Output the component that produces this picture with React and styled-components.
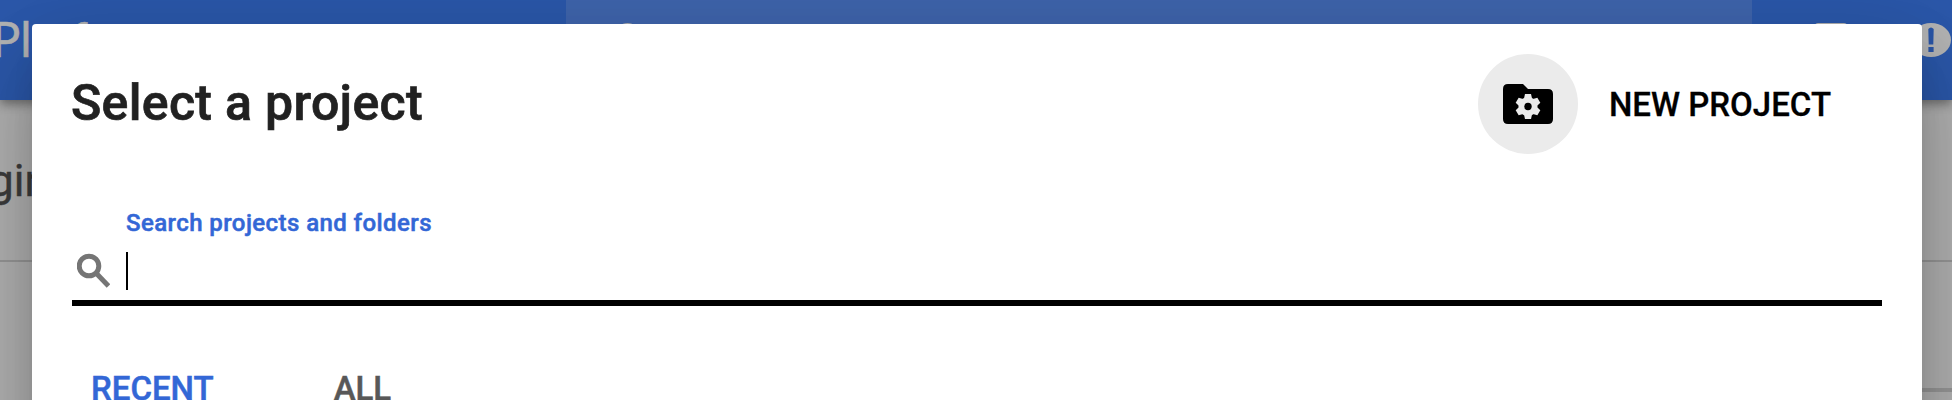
import React from "react";
import styled, { createGlobalStyle } from "styled-components";

const Global = createGlobalStyle`
  *, *::before, *::after { box-sizing: border-box; }
  html, body { margin: 0; height: 400px; overflow: hidden; }
  body { font-family: Roboto, "Liberation Sans", sans-serif; background: #b2b2b2; }
`;

const Screen = styled.div`
  position: relative;
  width: 1952px;
  height: 400px;
  overflow: hidden;
`;

const TopBar = styled.header`
  position: relative;
  display: flex;
  height: 100px;
  background: #2b58ab;
  box-shadow: 0 4px 10px rgba(0, 0, 0, 0.4);
`;

const Brand = styled.div`
  flex: none;
  display: flex;
  justify-content: flex-start;
  width: 566px;
  padding-top: 9px;
  overflow: hidden;
  color: #b5b5b5;
  font-family: Lato, sans-serif;
  font-size: 48px;
  font-weight: 400;
  line-height: 60px;
  white-space: nowrap;
`;

const BrandName = styled.span`
  margin-left: -8.5px;
  -webkit-text-stroke: 0.5px currentColor;
`;

const TopSearch = styled.div`
  flex: none;
  width: 1186px;
  height: 80px;
  padding: 21px 0 0 48px;
  background: #3f65ad;
`;

const TopActions = styled.div`
  display: flex;
  flex: 1;
  padding-left: 63px;
  padding-top: 23px;
  gap: 65px;
`;

const ActionIcon = styled.svg`
  flex: none;
  display: block;
`;

const PageTitle = styled.h1`
  margin: 0;
  height: 160px;
  padding-top: 55px;
  overflow: hidden;
  color: #3c3c3c;
  font-size: 44px;
  font-weight: 400;
  line-height: 52px;
`;

const TitleText = styled.span`
  margin-left: -11px;
  -webkit-text-stroke: 0.4px currentColor;
`;

const Rule = styled.div`
  width: ${(p) => p.$width || "100%"};
  height: ${(p) => p.$size}px;
  margin-left: auto;
  margin-bottom: ${(p) => p.$after || 0}px;
  background: #979797;
`;

const Dialog = styled.section`
  position: absolute;
  top: 24px;
  left: 32px;
  width: 1890px;
  height: 700px;
  padding: 30px 40px 0;
  border-radius: 4px;
  background: #fff;
  box-shadow: 0 22px 30px -14px rgba(0, 0, 0, 0.2),
    0 48px 76px 6px rgba(0, 0, 0, 0.14), 0 18px 92px 16px rgba(0, 0, 0, 0.12);
`;

const DialogHeader = styled.div`
  display: flex;
  align-items: center;
  justify-content: space-between;
  height: 100px;
`;

const DialogTitle = styled.h2`
  margin: 0 0 2px -1px;
  color: #212121;
  font-size: 50px;
  font-weight: 500;
  line-height: 60px;
  letter-spacing: 0.33px;
  -webkit-text-stroke: 0.7px #212121;
`;

const NewProject = styled.button`
  display: flex;
  align-items: center;
  gap: 31px;
  padding: 0;
  margin-right: 51px;
  border: 0;
  background: none;
  color: #000;
  font: 500 33px/40px Roboto, sans-serif;
  -webkit-text-stroke: 0.3px #000;
`;

const NewProjectLabel = styled.span`
  padding-top: 2px;
`;

const IconDisc = styled.span`
  display: flex;
  align-items: center;
  justify-content: center;
  width: 100px;
  height: 100px;
  border-radius: 50%;
  background: #ebebeb;
`;

const SearchField = styled.div`
  display: flex;
  flex-direction: column;
  height: 152px;
  padding-top: 54px;
  border-bottom: 6px solid #000;
`;

const SearchLabel = styled.label`
  margin-left: 54px;
  color: #3367d6;
  font-size: 24px;
  font-weight: 500;
  line-height: 30px;
  letter-spacing: 0.42px;
  -webkit-text-stroke: 0.5px #3367d6;
`;

const SearchRow = styled.div`
  display: flex;
  margin-top: 14px;
  padding-left: 5px;
`;

const Caret = styled.span`
  width: 2px;
  height: 38px;
  margin-left: 16px;
  background: #000;
`;

const Tabs = styled.nav`
  display: flex;
  gap: 120px;
  padding: 63px 0 0 19px;
`;

const Tab = styled.span`
  color: ${(p) => (p.$active ? "#3367d6" : "#585858")};
  font-size: 33px;
  font-weight: 500;
  line-height: 40px;
  -webkit-text-stroke: 0.5px currentColor;
`;

function FolderGear() {
  return (
    <svg width="50" height="40" viewBox="0 0 50 40">
      <path d="M5 0H20L25 5H45Q50 5 50 10V35Q50 40 45 40H5Q0 40 0 35V5Q0 0 5 0Z" />
      <g transform="translate(25 22.5)">
        <g fill="#ebebeb">
          <circle r="9.5" />
          {[0, 60, 120].map((a) => (
            <path key={a} transform={`rotate(${a})`} d="M-3-12.5H3L4-8V8L3 12.5H-3L-4 8V-8Z" />
          ))}
        </g>
        <circle r="3.7" />
      </g>
    </svg>
  );
}

function Magnifier() {
  return (
    <svg width="33" height="38" viewBox="0 0 33 38" fill="none" stroke="#757575">
      <circle cx="12" cy="14" r="9.8" strokeWidth="5" />
      <path d="M19 21L31.5 34" strokeWidth="5" />
    </svg>
  );
}

export default function App() {
  return (
    <Screen>
      <Global />
      <TopBar>
        <Brand>
          <BrandName>Platform</BrandName>
        </Brand>
        <TopSearch>
          <ActionIcon width="30" height="30" viewBox="0 0 30 30" fill="none" stroke="#b2b2b2" strokeWidth="4">
            <circle cx="13.5" cy="13.5" r="9.5" />
            <path d="M20 20L28 28" />
          </ActionIcon>
        </TopSearch>
        <TopActions>
          <ActionIcon width="32" height="34" viewBox="0 0 32 34">
            <rect width="32" height="34" rx="3" fill="#b2b2b2" />
          </ActionIcon>
          <ActionIcon width="40" height="34" viewBox="0 0 40 34">
            <ellipse cx="19" cy="17" rx="20" ry="17" fill="#b5b5b5" />
            <path d="M16.3 6Q19 3 21.7 6L21.3 21.5H16.7ZM16.4 24H21.6V29H16.4Z" fill="#2a56a8" />
          </ActionIcon>
        </TopActions>
      </TopBar>
      <PageTitle>
        <TitleText>gine</TitleText>
      </PageTitle>
      <Rule $size={2} $after={126} />
      <Rule $size={4} $width="60%" />
      <Dialog>
        <DialogHeader>
          <DialogTitle>Select a project</DialogTitle>
          <NewProject>
            <IconDisc>
              <FolderGear />
            </IconDisc>
            <NewProjectLabel>NEW PROJECT</NewProjectLabel>
          </NewProject>
        </DialogHeader>
        <SearchField>
          <SearchLabel>Search projects and folders</SearchLabel>
          <SearchRow>
            <Magnifier />
            <Caret />
          </SearchRow>
        </SearchField>
        <Tabs>
          <Tab $active>RECENT</Tab>
          <Tab>ALL</Tab>
        </Tabs>
      </Dialog>
    </Screen>
  );
}
